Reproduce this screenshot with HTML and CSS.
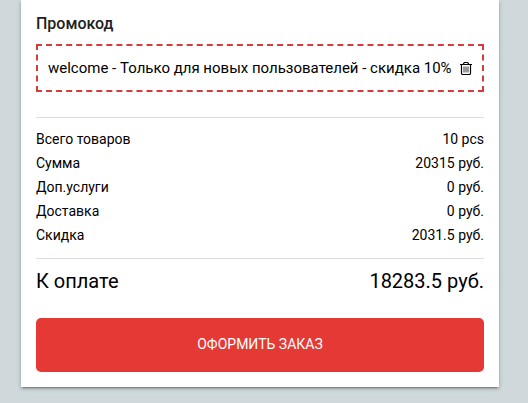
FILE: index.html
```html
<!DOCTYPE html>
<html lang="ru">

<head>
    <meta charset="UTF-8">
    <meta name="viewport" content="width=device-width, initial-scale=1.0">
    <title>Оформление заказа</title>
    <link rel="stylesheet" href="styles.css">
</head>

<body>

    <div class="order-card">
        <h4 class="promo-title">Промокод</h4>
        <div class="promo-code">
            <span>welcome - Только для новых пользователей - скидка 10%</span>
            <button type="button" class="promo-delete" aria-label="Удалить промокод">
                <svg width="12" height="14" viewBox="0 0 12 14" fill="none" stroke="currentColor">
                    <path d="M0 3.5h12" stroke-width="1" />
                    <path d="M3.5 3.5v-1l1-1h3l1 1v1" stroke-width="1.1" />
                    <path d="M1.5 3.5v8.8q0 1.2 1.2 1.2h6.6q1.2 0 1.2-1.2v-8.8" stroke-width="1.2" />
                    <path d="M4 5.5v6M6 5.5v6M8 5.5v6" stroke-width="0.8" />
                </svg>
            </button>
        </div>

        <dl class="order-list">
            <div class="order-row">
                <dt>Всего товаров</dt>
                <dd>10 pcs</dd>
            </div>
            <div class="order-row">
                <dt>Сумма</dt>
                <dd>20315 руб.</dd>
            </div>
            <div class="order-row">
                <dt>Доп.услуги</dt>
                <dd>0 руб.</dd>
            </div>
            <div class="order-row">
                <dt>Доставка</dt>
                <dd>0 руб.</dd>
            </div>
            <div class="order-row">
                <dt>Скидка</dt>
                <dd>2031.5 руб.</dd>
            </div>
        </dl>

        <div class="order-total">
            <span>К оплате</span>
            <span>18283.5 руб.</span>
        </div>

        <button type="button" class="order-btn">ОФОРМИТЬ ЗАКАЗ</button>
    </div>

</body>

</html>
```
FILE: styles.css
```css
* {
    box-sizing: border-box;
}

body {
    margin: 0;
    padding: 0 29px 16px 21px;
    background-color: #cfd8db;
    color: #000;
    font-family: Roboto, "Liberation Sans", sans-serif;
    font-size: 14px;
    line-height: 24px;
}

h4,
dl,
dt,
dd {
    margin: 0;
    padding: 0;
}

.order-card {
    padding: 12px 15px 15px;
    background-color: #fff;
    box-shadow: 0 3px 1px -2px rgba(0, 0, 0, .2), 0 2px 2px rgba(0, 0, 0, .14), 0 1px 5px rgba(0, 0, 0, .2);
}

.promo-title {
    font-size: 16px;
    font-weight: 500;
    color: #212121;
}

.promo-code {
    display: flex;
    align-items: center;
    gap: 8px;
    margin-top: 8px;
    padding: 10px;
    border: 2px dashed #d43c3a;
    font-size: 15px;
}

.promo-delete {
    display: flex;
    padding: 0;
    border: 0;
    background: none;
    color: #000;
    cursor: pointer;
}

.order-list {
    margin-top: 25px;
    padding: 9px 0 11px;
    border-top: 1px solid #dcdcdc;
    border-bottom: 1px solid #dcdcdc;
}

.order-row,
.order-total {
    display: flex;
    justify-content: space-between;
}

.order-total {
    padding: 10px 0 25px;
    font-size: 20px;
}

.order-btn {
    display: block;
    width: 100%;
    padding: 14px 15px 16px;
    border: 0;
    border-radius: 5px;
    background-color: #e53935;
    color: #fff;
    font-family: inherit;
    font-size: 14px;
    line-height: 24px;
    cursor: pointer;
}
```
